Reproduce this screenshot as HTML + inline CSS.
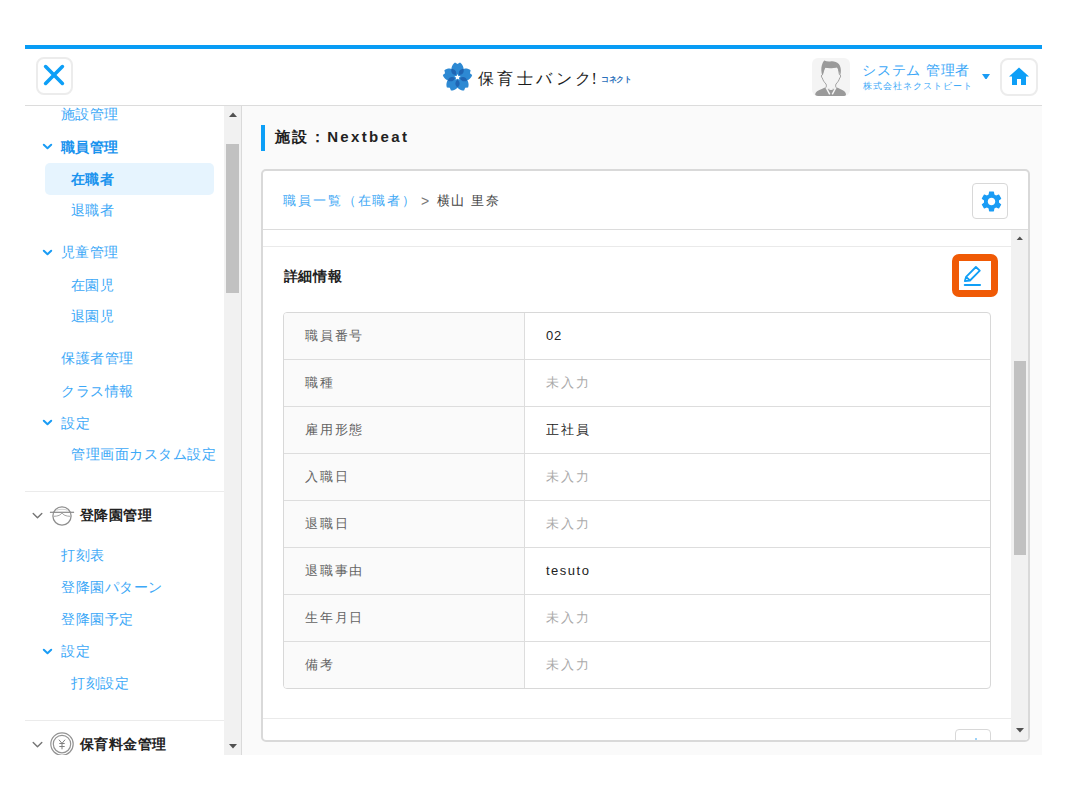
<!DOCTYPE html>
<html lang="ja">
<head>
<meta charset="utf-8">
<title>保育士バンク! コネクト</title>
<style>
*{box-sizing:border-box;margin:0;padding:0}
html,body{width:1067px;height:800px;overflow:hidden;background:#fff;font-family:"Liberation Sans",sans-serif}
body{font-family:"Liberation Sans",sans-serif;font-size:14px;color:#333;position:relative}
.abs{position:absolute}
.t{position:absolute;white-space:nowrap;line-height:16px;height:16px}
#app{position:absolute;left:25px;top:45px;width:1017px;height:710px;overflow:hidden;background:#fafafa}
#topbar{position:absolute;left:0;top:0;width:1017px;height:4px;background:#089cf5}
#header{position:absolute;left:0;top:4px;width:1017px;height:57px;background:#fff;border-bottom:1px solid #dcdcdc}
.sqbtn{position:absolute;background:#fff;border:2px solid #ececec;border-radius:8px}
#side{position:absolute;left:0;top:61px;width:217px;height:649px;background:#fff;overflow:hidden;border-right:1px solid #dadada}
#side .t{color:#3ca8f7;font-size:14px;letter-spacing:.5px}
#side .t.h{color:#222;font-weight:bold}
#side .t.b{font-weight:bold;color:#1a93ee}
.sdiv{position:absolute;left:0;width:199px;height:1px;background:#ebebeb}
.sb{position:absolute;background:#f1f1f1}
.thumb{position:absolute;background:#c1c1c1}
#main{position:absolute;left:217px;top:61px;width:800px;height:649px;background:#fafafa}
#card{position:absolute;left:19px;top:63px;width:769px;height:573px;background:#fff;border:2px solid #d9d9d9;border-radius:5px;overflow:hidden}
.row{position:absolute;left:0;width:706px;height:47px;border-top:1px solid #ddd}
.row .l{position:absolute;left:0;top:0;width:241px;height:46px;background:#fafafa;border-right:1px solid #ddd}
.row .t{top:15px;font-size:13px;letter-spacing:1.750px}
.row .k{left:21px;color:#636363}
.row .v{left:262px;color:#222}
.row .n{left:262px;color:#aaa}
</style>
</head>
<body>
<div id="app">
  <div id="topbar"></div>
  <div id="header">
    <div class="sqbtn" style="left:10.500px;top:8px;width:37.500px;height:37.500px">
      <svg class="abs" style="left:4.100px;top:4px" width="24" height="24" viewBox="0 0 24 24"><path d="M3.6 3.6 L20.4 20.4 M20.4 3.6 L3.6 20.4" stroke="#0d9ff7" stroke-width="3.6" stroke-linecap="round" fill="none"/></svg>
    </div>
    <svg class="abs" style="left:417px;top:12px" width="31" height="32" viewBox="-15.500 -16.200 31 32">
      <g fill="#2d89d3">
        <path id="pt" d="M0 0 C-1.500 -2 -6.800 -5 -6 -9.200 C-5.500 -11.600 -4.200 -13.500 -2.500 -14.600 L0 -13.100 L2.500 -14.600 C4.200 -13.500 5.500 -11.600 6 -9.200 C6.800 -5 1.500 -2 0 0Z"/>
        <use href="#pt" transform="rotate(72)"/><use href="#pt" transform="rotate(144)"/><use href="#pt" transform="rotate(216)"/><use href="#pt" transform="rotate(288)"/>
      </g>
      <g fill="#2065b3">
        <path id="pi" d="M0 -2.600 C2.700 -4.800 2.900 -7.800 0 -10.300 C-2.900 -7.800 -2.700 -4.800 0 -2.600Z" transform="rotate(36)"/>
        <use href="#pi" transform="rotate(72)"/><use href="#pi" transform="rotate(144)"/><use href="#pi" transform="rotate(216)"/><use href="#pi" transform="rotate(288)"/>
      </g>
      <path d="M0 -3.300 L0.850 -1.170 L3.140 -1.020 L1.380 0.450 L1.940 2.670 L0 1.450 L-1.940 2.670 L-1.380 0.450 L-3.140 -1.020 L-0.850 -1.170Z" fill="#fff"/>
    </svg>
    <div class="t" id="logo" style="left:452.500px;top:19.800px;font-family:'Liberation Serif',serif;font-size:16px;line-height:20px;height:20px;letter-spacing:3.500px;color:#1c1c1c">保育士バンク<span style="margin-left:-3px">!</span></div>
    <div class="t" id="conn" style="left:576px;top:25px;font-size:8px;line-height:12px;height:12px;font-weight:bold;color:#2a6fba;letter-spacing:-.3px">コネクト</div>
    <div class="abs" id="avatar" style="left:787px;top:8.500px;width:38px;height:38.500px;border-radius:6px;background:#f4f4f4;overflow:hidden">
      <svg width="38" height="38.500" viewBox="0 0 38 38.500"><path d="M3.200 36.500 C3.400 33.200 8 31.600 14 29.300 L24.100 29.300 C30 31.600 33.800 33.200 34 36.500 C34 37.600 33.300 38.200 32.200 38.200 L5 38.200 C3.900 38.200 3.200 37.600 3.200 36.500Z" fill="#9a9a9a"/><path d="M10.600 16.500 C9 16.800 9 19 10.300 20 C11 22.500 12.500 24.500 14 26 C14.600 27.300 14.400 28.500 14 29.800 L19 32 L24 29.800 C23.600 28.500 23.400 27.300 24 26 C25.500 24.500 27 22.500 27.700 20 C29 19 29 16.800 27.400 16.500 L26 9 L12 9Z" fill="#f4f4f4" stroke="#9a9a9a" stroke-width=".9"/><path d="M12.100 2.400 C14 3.200 16 3.600 18.100 3.400 C21 2.800 24.500 3.500 26.800 6 C28.600 8.200 29.200 11.500 28.800 14.500 C28.600 15.800 28.300 16.800 28 17.600 C27.600 14.500 26.600 11.500 24.800 9.200 C21.500 10.300 17 10.500 13.300 9.800 C12.300 12 11.300 14.800 10.300 17.600 C9.200 14 9 10.500 9.800 7.500 C10.300 5.500 11 3.800 12.100 2.400Z" fill="#9a9a9a"/><path d="M14.300 30 L17.500 35.800 M23.700 30 L20.500 35.800" stroke="#f4f4f4" stroke-width="1.500" stroke-linecap="round"/><path d="M14.300 30 L19 31.600 L23.700 30" stroke="#f4f4f4" stroke-width="1" fill="none"/></svg>
    </div>
    <div class="t" id="uname" style="left:837px;top:11.500px;font-size:14px;line-height:18px;height:18px;color:#3ca8f7;letter-spacing:.8px">システム 管理者</div>
    <div class="t" id="ucomp" style="left:837.500px;top:31px;font-size:9px;line-height:13px;height:13px;color:#3ca8f7;letter-spacing:1.080px">株式会社ネクストビート</div>
    <svg class="abs" style="left:957px;top:24.600px" width="8" height="5.900" viewBox="0 0 9 6" preserveAspectRatio="none"><path d="M0 0H9L4.500 6Z" fill="#1a9cf5"/></svg>
    <div class="sqbtn" style="left:975px;top:9px;width:37.500px;height:37.500px">
      <svg class="abs" style="left:7px;top:7px" width="20" height="19" viewBox="0 0 20 19"><path d="M10 0.500 L0 9.500 H3 V18 H8 V12 H12 V18 H17 V9.500 H20 Z" fill="#0d9ff7"/></svg>
    </div>
  </div>
  <div id="side">
    <div class="abs" style="left:20px;top:57px;width:169px;height:32px;border-radius:5px;background:#e6f4fe"></div>
    <div class="t " id="s0" style="left:35.5px;top:0.3px">施設管理</div>
    <div class="t b" id="s1" style="left:35.5px;top:33.0px">職員管理</div>
    <svg class="abs" style="left:17.400px;top:37.2px" width="11" height="8" viewBox="0 0 11 8"><path d="M1.800 1.800 L5.500 5.300 L9.200 1.800" stroke="#1a9cf5" stroke-width="2" fill="none" stroke-linecap="round" stroke-linejoin="round"/></svg>
    <div class="t b" id="s2" style="left:45.6px;top:64.7px">在職者</div>
    <div class="t " id="s3" style="left:45.6px;top:96.2px">退職者</div>
    <div class="t " id="s4" style="left:35.5px;top:138.4px">児童管理</div>
    <svg class="abs" style="left:17.400px;top:142.6px" width="11" height="8" viewBox="0 0 11 8"><path d="M1.800 1.800 L5.500 5.300 L9.200 1.800" stroke="#1a9cf5" stroke-width="2" fill="none" stroke-linecap="round" stroke-linejoin="round"/></svg>
    <div class="t " id="s5" style="left:45.6px;top:170.5px">在園児</div>
    <div class="t " id="s6" style="left:45.6px;top:202.3px">退園児</div>
    <div class="t " id="s7" style="left:36px;top:244.3px">保護者管理</div>
    <div class="t " id="s8" style="left:36px;top:276.5px">クラス情報</div>
    <div class="t " id="s9" style="left:36px;top:308.5px">設定</div>
    <svg class="abs" style="left:17.400px;top:312.7px" width="11" height="8" viewBox="0 0 11 8"><path d="M1.800 1.800 L5.500 5.300 L9.200 1.800" stroke="#1a9cf5" stroke-width="2" fill="none" stroke-linecap="round" stroke-linejoin="round"/></svg>
    <div class="t " id="s10" style="left:46px;top:340.3px">管理画面カスタム設定</div>
    <div class="t h" id="s11" style="left:54.5px;top:401.0px">登降園管理</div>
    <svg class="abs" style="left:7px;top:405.6px" width="11" height="8" viewBox="0 0 11 8"><path d="M1.200 1.500 L5.500 5.800 L9.800 1.500" stroke="#757575" stroke-width="1.400" fill="none" stroke-linecap="round" stroke-linejoin="round"/></svg>
    <div class="t " id="s12" style="left:36px;top:441.0px">打刻表</div>
    <div class="t " id="s13" style="left:36px;top:473.0px">登降園パターン</div>
    <div class="t " id="s14" style="left:36px;top:504.8px">登降園予定</div>
    <div class="t " id="s15" style="left:36px;top:537.3px">設定</div>
    <svg class="abs" style="left:17.400px;top:541.5px" width="11" height="8" viewBox="0 0 11 8"><path d="M1.800 1.800 L5.500 5.300 L9.200 1.800" stroke="#1a9cf5" stroke-width="2" fill="none" stroke-linecap="round" stroke-linejoin="round"/></svg>
    <div class="t " id="s16" style="left:46px;top:569.0px">打刻設定</div>
    <div class="t h" id="s17" style="left:54.5px;top:629.8px">保育料金管理</div>
    <svg class="abs" style="left:7px;top:635.200px" width="11" height="8" viewBox="0 0 11 8"><path d="M1.200 1.500 L5.500 5.800 L9.800 1.500" stroke="#757575" stroke-width="1.400" fill="none" stroke-linecap="round" stroke-linejoin="round"/></svg>
    <div class="sdiv" style="top:385px"></div>
    <div class="sdiv" style="top:614px"></div>
    <svg class="abs" id="ic1" style="left:24px;top:398px" width="26" height="24" viewBox="0 0 26 24"><circle cx="13" cy="12" r="9.100" fill="none" stroke="#8f8f8f" stroke-width="1.300"/><path d="M0.900 8.300 H25.100" stroke="#8a8a8a" stroke-width="1.200"/><path d="M13 8.700 C12 11 9 12.300 4.900 12.300 M13 8.700 C14 11 17 12.300 21.200 12.300" fill="none" stroke="#a5a5a5" stroke-width="1"/><path d="M7.500 6.200 C10 5 16 5 18.500 6.200" fill="none" stroke="#d0d0d0" stroke-width="1"/></svg>
    <svg class="abs" id="ic2" style="left:25px;top:626px" width="24" height="24" viewBox="0 0 24 24"><circle cx="12" cy="12.100" r="11.200" fill="none" stroke="#939393" stroke-width="1.200"/><circle cx="12" cy="12.100" r="8.700" fill="none" stroke="#939393" stroke-width="1.200"/><path d="M8.900 7.700 L12 11.400 L15.100 7.700 M12 11.400 V17.300 M9.300 11.500 H14.700 M9.300 14.500 H14.700" fill="none" stroke="#808080" stroke-width="1"/></svg>
    <div class="sb" style="left:199px;top:0;width:17px;height:649px"></div>
    <div class="thumb" style="left:201px;top:38px;width:13px;height:149px"></div>
    <svg class="abs" style="left:203.500px;top:6px" width="8" height="5" viewBox="0 0 8 5"><path d="M0 5H8L4 0.500Z" fill="#505050"/></svg>
    <svg class="abs" style="left:203.500px;top:638px" width="8" height="5" viewBox="0 0 8 5"><path d="M0 0H8L4 4.500Z" fill="#505050"/></svg>
  </div>
  <div id="main">
    <div class="abs" style="left:19px;top:19px;width:4px;height:25.500px;background:#0d9ff7"></div>
    <div class="t" id="title" style="left:32.700px;top:21px;font-size:15px;line-height:20px;height:20px;font-weight:bold;color:#222;letter-spacing:2.500px">施設：<span id="tn" style="letter-spacing:2.350px">Nextbeat</span></div>
    <div id="card">
      <div class="t" id="bc1" style="left:20.300px;top:22px;font-size:13px;letter-spacing:1.850px;color:#3fa9f5">職員一覧（在職者）</div><div class="t" id="bc2" style="left:158px;top:22px;font-size:14px;color:#777">&gt;</div><div class="t" id="bc3" style="left:173.500px;top:22px;font-size:13px;letter-spacing:1.600px;color:#444">横山 里奈</div>
      <div class="abs" style="left:709px;top:12px;width:36px;height:36px;border:1px solid #d8d8d8;border-radius:4px;background:#fff"><svg class="abs" style="left:5.600px;top:4.900px" width="25" height="25" viewBox="0 0 24 24"><path fill="#1a9cf5" d="M19.140 12.940c.040-.300.060-.610.060-.940s-.020-.640-.070-.940l2.030-1.580a.490.490 0 0 0 .120-.610l-1.920-3.320a.488.488 0 0 0-.590-.220l-2.390.960c-.500-.380-1.030-.700-1.620-.940l-.360-2.540a.484.484 0 0 0-.480-.410h-3.840c-.240 0-.430.170-.470.410l-.360 2.540c-.590.240-1.130.570-1.620.940l-2.390-.960c-.220-.080-.470 0-.590.220L2.740 8.870c-.120.210-.080.470.120.610l2.030 1.580c-.050.300-.090.630-.090.940s.020.640.070.940l-2.030 1.580a.490.490 0 0 0-.120.610l1.920 3.320c.120.220.370.290.590.220l2.390-.960c.500.380 1.030.700 1.620.940l.360 2.540c.050.240.240.410.480.410h3.840c.240 0 .440-.170.470-.410l.360-2.540c.590-.240 1.130-.560 1.620-.940l2.390.960c.220.080.470 0 .590-.220l1.920-3.320c.120-.220.070-.470-.120-.610l-2.010-1.580zM12 15.600c-1.980 0-3.600-1.620-3.600-3.600s1.620-3.600 3.600-3.600 3.600 1.620 3.600 3.600-1.620 3.600-3.600 3.600z"/></svg></div>
      <div class="abs" style="left:0;top:58px;width:765px;height:1px;background:#dcdcdc"></div>
      <div class="abs" id="scroll" style="left:0;top:59px;width:765px;height:510px;overflow:hidden">
        <div class="abs" style="left:0;top:16px;width:748px;height:1px;background:#eaeaea"></div>
        <div class="t" id="sec" style="left:20.500px;top:37.500px;font-size:14px;font-weight:bold;color:#222;letter-spacing:.900px">詳細情報</div>
        <div class="abs" id="hl" style="left:689px;top:24px;width:46px;height:43px;border:7px solid #f05a05;border-radius:7px;background:#fff"><svg class="abs" style="left:4px;top:3.900px" width="20" height="22" viewBox="0 0 20 22"><path d="M12.900 2 L16.800 5.700 L7 15.500 L1.800 16.200 L3.100 11.800 Z M3.100 11.800 L7 15.500" fill="none" stroke="#109ff6" stroke-width="1.800" stroke-linejoin="round"/><path d="M1.800 20 H17" stroke="#109ff6" stroke-width="2.100" stroke-linecap="round"/></svg></div>
        <div class="abs" id="tbl" style="left:20px;top:82px;width:708px;height:377px;border:1px solid #d8d8d8;border-radius:4px;overflow:hidden;background:#fff">
          <div class="row" style="top:0px;border-top:0"><div class="l"></div><div class="t k">職員番号</div><div class="t v" style="letter-spacing:.8px">02</div></div>
          <div class="row" style="top:46px"><div class="l"></div><div class="t k">職種</div><div class="t n">未入力</div></div>
          <div class="row" style="top:93px"><div class="l"></div><div class="t k">雇用形態</div><div class="t v">正社員</div></div>
          <div class="row" style="top:140px"><div class="l"></div><div class="t k">入職日</div><div class="t n">未入力</div></div>
          <div class="row" style="top:187px"><div class="l"></div><div class="t k">退職日</div><div class="t n">未入力</div></div>
          <div class="row" style="top:234px"><div class="l"></div><div class="t k">退職事由</div><div class="t v" style="letter-spacing:1.500px">tesuto</div></div>
          <div class="row" style="top:281px"><div class="l"></div><div class="t k">生年月日</div><div class="t n">未入力</div></div>
          <div class="row" style="top:328px"><div class="l"></div><div class="t k">備考</div><div class="t n">未入力</div></div>
        </div>
        <div class="abs" style="left:0;top:488px;width:748px;height:1px;background:#eaeaea"></div>
        <div class="abs" style="left:692px;top:499px;width:36px;height:36px;border:1px solid #d8d8d8;border-radius:4px;background:#fff"></div>
        <div class="abs" style="left:712.300px;top:508.300px;width:1.600px;height:1.600px;border-radius:1px;background:#7cc4f7"></div>
        <div class="sb" style="left:748px;top:0;width:17px;height:510px"></div>
        <div class="thumb" style="left:750.500px;top:131px;width:12.500px;height:194px"></div>
        <svg class="abs" style="left:752.700px;top:5.700px" width="7.600" height="4.600" viewBox="0 0 8 5"><path d="M0 5H8L4 0.500Z" fill="#505050"/></svg>
        <svg class="abs" style="left:752.500px;top:498px" width="8" height="5" viewBox="0 0 8 5"><path d="M0 0H8L4 4.500Z" fill="#505050"/></svg>
      </div>
    </div>
  </div>
</div>
</body>
</html>
